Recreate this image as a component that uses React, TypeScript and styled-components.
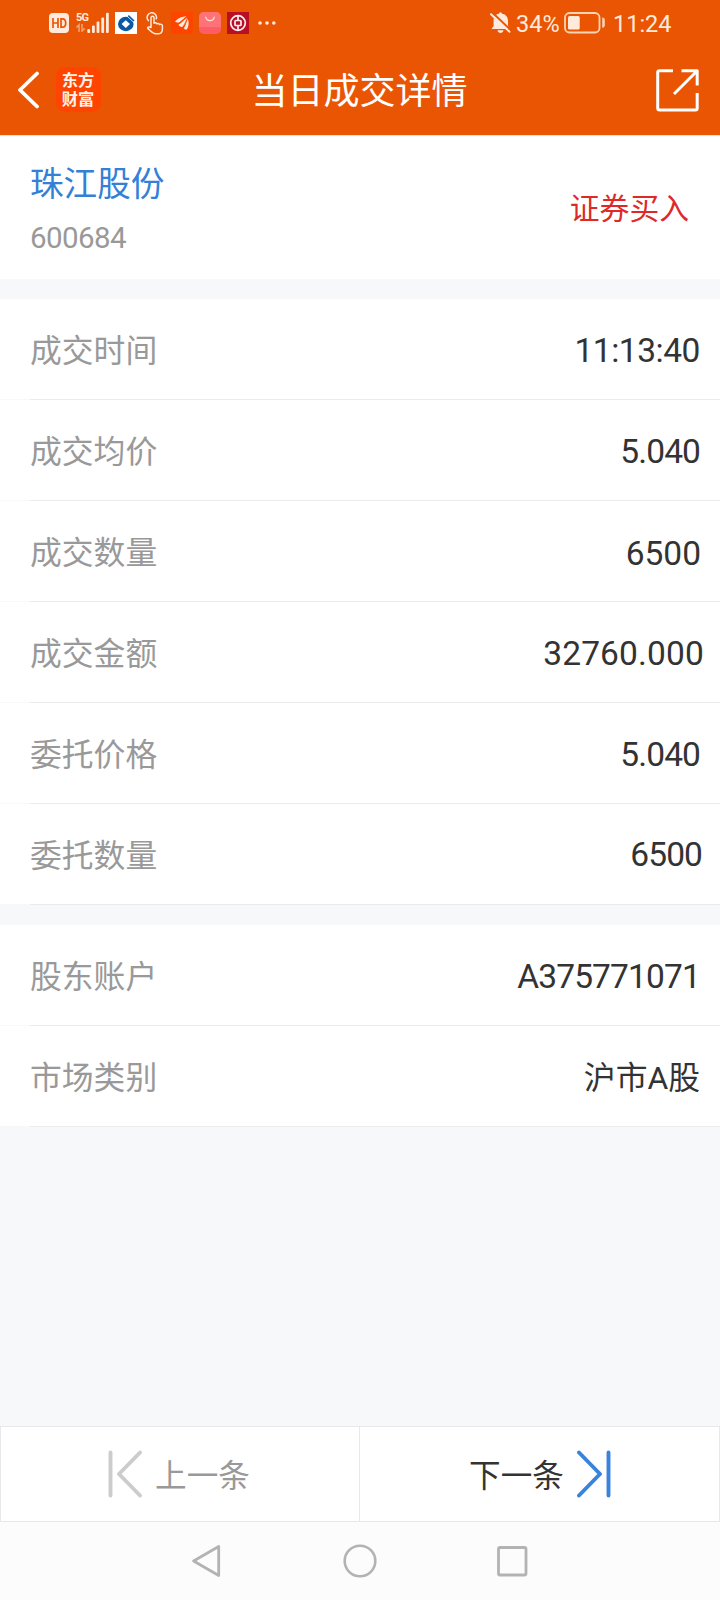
import React, { Fragment } from "react";
import styled, { createGlobalStyle } from "styled-components";

const GlobalStyle = createGlobalStyle`
  * { box-sizing: border-box; }
  body {
    margin: 0;
    background: #f6f8fa;
    font-family: Roboto, "Noto Sans CJK SC", sans-serif;
  }
  svg { display: block; flex: none; }
`;

const Screen = styled.div`
  width: 720px;
  height: 1600px;
  display: flex;
  flex-direction: column;
  background: #f6f8fa;
  overflow: hidden;
`;

const Top = styled.header`
  height: 136px;
  flex: none;
  background: #ea5504;
  border-bottom: 1px solid #fbdfbd;
`;

const StatusBar = styled.div`
  height: 46px;
  padding: 0 49px;
  display: flex;
  align-items: center;
  color: #ffeadb;
`;

const StatusItem = styled.div<{ $before?: number }>`
  margin-left: ${(p) => p.$before ?? 0}px;
`;

const StatusText = styled.span<{ $before: number; $width: number; $spacing?: number }>`
  margin-left: ${(p) => p.$before}px;
  width: ${(p) => p.$width}px;
  font-size: 23.5px;
  line-height: 46px;
  padding-top: 1px;
  letter-spacing: ${(p) => p.$spacing ?? 0}px;
  white-space: nowrap;
`;

const Spacer = styled.div`
  flex: 1;
`;

const TitleBar = styled.div`
  height: 89px;
  padding: 0 21px 0 18px;
  display: grid;
  grid-template-columns: 200px 1fr 200px;
  align-items: center;
  color: #fff;
`;

const TitleLeft = styled.div`
  display: flex;
  align-items: center;
  gap: 17px;
  padding-bottom: 1px;
`;

const Logo = styled.div`
  width: 45px;
  height: 45px;
  margin-bottom: 2px;
  padding-right: 1px;
  border-radius: 9px;
  background: #ff4400;
  display: flex;
  flex-direction: column;
  align-items: center;
  justify-content: center;
  font-family: "Noto Sans CJK SC", sans-serif;
  font-weight: 700;
  font-size: 16.3px;
  line-height: 19.5px;
  color: #fff3ea;
`;

const Title = styled.h1`
  margin: 0;
  padding: 3px 0 0 2px;
  font-size: 36px;
  font-weight: 400;
  line-height: 52px;
  text-align: center;
  white-space: nowrap;
`;

const TitleRight = styled.div`
  display: flex;
  justify-content: flex-end;
`;

const Stock = styled.section`
  height: 143px;
  flex: none;
  margin-bottom: 20px;
  padding: 25px 31px 0 30px;
  display: flex;
  justify-content: space-between;
  background: #fff;
`;

const StockName = styled.div`
  font-size: 33.6px;
  line-height: 48px;
  color: #3380d6;
`;

const StockCode = styled.div`
  margin-top: 11px;
  font-size: 29.5px;
  line-height: 36px;
  letter-spacing: -0.6px;
  color: #999;
`;

const Side = styled.div`
  padding-top: 26px;
  font-size: 29.8px;
  line-height: 44px;
  color: #dd2a28;
`;

const Group = styled.section`
  flex: none;
  margin-bottom: 20px;
`;

const Row = styled.div`
  height: 100px;
  padding: 0 19px 0 30px;
  background: #fff;
  display: flex;
  align-items: center;
  justify-content: space-between;
`;

const Divider = styled.div`
  height: 1px;
  margin-left: 30px;
  background: #ebebed;
`;

const Label = styled.span`
  font-size: 31.8px;
  line-height: 46px;
  padding-top: 4px;
  color: #999;
`;

const Value = styled.span<{ $spacing?: number; $right?: number; $top?: number; $size?: number }>`
  font-size: ${(p) => p.$size ?? 33.5}px;
  line-height: 46px;
  letter-spacing: ${(p) => p.$spacing ?? 0}px;
  margin-right: ${(p) => p.$right ?? 0}px;
  padding-top: ${(p) => p.$top ?? 4}px;
  color: #333;
`;

const Pager = styled.div`
  height: 96px;
  flex: none;
  margin-top: auto;
  display: grid;
  grid-template-columns: 358px 1fr;
  background: #fff;
  border: 1px solid #e8e8ea;
`;

const PagerButton = styled.button<{ $muted?: boolean }>`
  border: 0;
  border-left: ${(p) => (p.$muted ? "0" : "1px solid #e8e8ea")};
  padding: ${(p) => (p.$muted ? "0 2px 0 0" : "0 0 0 1px")};
  background: none;
  display: flex;
  align-items: center;
  justify-content: center;
  gap: 12px;
  font: inherit;
  font-size: 31.6px;
  line-height: 46px;
  color: ${(p) => (p.$muted ? "#999" : "#333")};
`;

const PagerText = styled.span`
  padding-top: 5px;
`;

const NavBar = styled.nav`
  height: 78px;
  flex: none;
  display: flex;
  align-items: center;
  justify-content: center;
  gap: 120px;
  background: #fcfcfc;
`;

interface RowData {
  label: string;
  value: string;
  spacing?: number;
  right?: number;
  top?: number;
  size?: number;
}

const trade: RowData[] = [
  { label: "成交时间", value: "11:13:40", spacing: -0.45, right: 1 },
  { label: "成交均价", value: "5.040", spacing: -0.9, right: 1 },
  { label: "成交数量", value: "6500", spacing: 0, top: 5 },
  { label: "成交金额", value: "32760.000", spacing: 0.15, right: -3 },
  { label: "委托价格", value: "5.040", spacing: -0.9, right: 1 },
  { label: "委托数量", value: "6500", spacing: -0.9, top: 2, right: -1 },
];

const account: RowData[] = [
  { label: "股东账户", value: "A375771071", spacing: -0.85, right: 1 },
  { label: "市场类别", value: "沪市A股", spacing: 0, size: 31.8, right: 1 },
];

const Rows = ({ items }: { items: RowData[] }) => (
  <Group>
    {items.map((r) => (
      <Fragment key={r.label}>
        <Row>
          <Label>{r.label}</Label>
          <Value $spacing={r.spacing} $right={r.right} $top={r.top} $size={r.size}>
            {r.value}
          </Value>
        </Row>
        <Divider />
      </Fragment>
    ))}
  </Group>
);

const HdIcon = () => (
  <svg width="20" height="20" viewBox="0 0 20 20">
    <rect width="20" height="20" rx="4" fill="#ffeadb" />
    <path d="M4 5v10M9 5v10M4 10h5M12 5.8v8.4h1.5c2.2 0 3.2-1.6 3.2-4.2s-1-4.2-3.2-4.2z" fill="none" stroke="#ea5504" strokeWidth="1.7" />
  </svg>
);

const Network = styled.div`
  height: 22px;
  display: flex;
  align-items: flex-end;
`;

const NetworkType = styled.div`
  width: 10px;
  height: 22px;
  font-size: 11px;
  font-weight: 700;
  line-height: 11px;
  letter-spacing: -0.8px;
`;

const NetworkIcon = () => (
  <Network>
    <NetworkType>
      5G
      <svg width="10" height="9" viewBox="0 0 10 9" fill="none" stroke="#f5a071" strokeWidth="1.6">
        <path d="M0.5 4.5L3 2v7M6 1v7l2.6-2.6" />
      </svg>
    </NetworkType>
    <svg width="24" height="22" viewBox="0 0 24 22" fill="#ffeadb">
      <rect x="1.3" y="17" width="2.8" height="4" rx="1" />
      <rect x="6" y="13.5" width="2.8" height="7.5" rx="1" />
      <rect x="10.6" y="9.5" width="2.8" height="11.5" rx="1" />
      <rect x="15.3" y="5.5" width="2.8" height="15.5" rx="1" />
      <rect x="20" y="0.7" width="2.8" height="20.3" rx="1" />
    </svg>
  </Network>
);

const BankBlueIcon = () => (
  <svg width="22" height="22" viewBox="0 0 22 22">
    <rect width="22" height="22" fill="#fff" />
    <ellipse cx="10.800" cy="12" rx="7.800" ry="7.200" fill="#0a58a4" />
    <path d="M10.800 8.200l4.200 3.900-4.200 3.900-4.200-3.900z" fill="#fff" />
    <path d="M11.500 3.500L18.500 10" stroke="#fff" strokeWidth="1" />
    <path d="M13.300 3.700L19 9" stroke="#0a58a4" strokeWidth="1.600" />
  </svg>
);

const TouchIcon = () => (
  <svg width="18" height="23" viewBox="0 0 18 23" fill="none" stroke="#ffeadb" strokeWidth="1.500" strokeLinejoin="round" strokeLinecap="round">
    <path d="M2.300 8.600A4.700 4.700 0 1 1 10.300 6.800" />
    <path d="M5 15.500V5.700a1.500 1.500 0 0 1 3 0v5.500c.8-.8 2.400-.6 2.800.6.900-.7 2.400-.4 2.700.7 1-.6 2.900-.2 2.900 1.300v2.700c0 3.200-1 5.200-3.700 5.200H9.500c-2.600 0-4.500-2.500-7.500-5-1-1.200.6-2.500 3-1.200z" />
  </svg>
);

const BrokerIcon = () => (
  <svg width="22" height="22" viewBox="0 0 22 22">
    <rect width="22" height="22" fill="#ff4400" />
    <path d="M4 9.500C7 6 11 4.500 15.500 4.300c-2.500 1.700-5 4.700-7 6-1.500.7-3.200.2-4.500-.8z" fill="#ffeadb" />
    <path d="M7.500 12.800c3-2 5.400-4.700 8.400-7.400-.1 3.700-2.200 8.200-5 9.600-1.400.1-2.700-.8-3.400-2.200z" fill="#ffeadb" />
    <path d="M12.800 16.200c1.900-3 3.100-6.200 3.800-9.700 1.700 3.700 1.100 8.200-.8 11-1.400-.1-2.500-.5-3-1.300z" fill="#ffeadb" />
    <path d="M7.200 11.600L16 5M11.800 15.600L16.600 6" stroke="#ff4400" strokeWidth=".8" />
  </svg>
);

const ShopIcon = () => (
  <svg width="22" height="22" viewBox="0 0 22 22">
    <rect width="22" height="22" rx="5" fill="#ff5d66" />
    <path d="M0 15V5a5 5 0 0 1 5-5h12a5 5 0 0 1 5 5v10z" fill="#ff7278" />
    <path d="M6.800 5.200c.8 4.600 7.600 4.600 8.400 0" fill="none" stroke="#ffe0d6" strokeWidth="1.300" strokeLinecap="round" />
  </svg>
);

const BankRedIcon = () => (
  <svg width="22" height="22" viewBox="0 0 22 22" fill="none" stroke="#ffeef0">
    <rect width="22" height="22" fill="#b80f25" stroke="none" />
    <circle cx="11" cy="11" r="7.300" strokeWidth="1.700" />
    <rect x="8" y="8.500" width="6" height="5" rx=".8" strokeWidth="1.700" />
    <path d="M11 3.500v5M11 13.500v5" strokeWidth="1.700" />
  </svg>
);

const MoreIcon = () => (
  <svg width="18" height="4" viewBox="0 0 18 4" fill="#ffeadb">
    <circle cx="2" cy="2" r="1.800" />
    <circle cx="9" cy="2" r="1.800" />
    <circle cx="15.800" cy="2" r="1.800" />
  </svg>
);

const MuteIcon = () => (
  <svg width="21" height="22" viewBox="0 0 21 22">
    <path d="M9 1.800a1.500 1.500 0 0 1 3 0c3.800.6 6 3.400 6 7V14l2 3H1.500L3.600 14V8.800c0-3.600 1.800-6.400 5.400-7zM7.500 18.300h6c-.4 1.800-1.600 2.700-3 2.700s-2.600-.9-3-2.700z" fill="#ffeadb" />
    <path d="M2.800 1L21.400 18.600" stroke="#ea5504" strokeWidth="2" />
    <path d="M1 2.200l18.500 17.600" stroke="#ffeadb" strokeWidth="1.900" strokeLinecap="round" />
  </svg>
);

const BatteryIcon = () => (
  <svg width="42" height="22" viewBox="0 0 42 22">
    <rect x="1" y="1" width="34.500" height="19.500" rx="4.500" fill="none" stroke="#ffd3b6" strokeWidth="1.800" />
    <rect x="4" y="4" width="11.700" height="13.500" rx="1.500" fill="#ffeadb" />
    <path d="M38.200 5.500c1.800 0 2.600 1 2.600 2.600v5c0 1.600-.8 2.600-2.600 2.600z" fill="#ffd3b6" />
  </svg>
);

const BackIcon = () => (
  <svg width="21" height="38" viewBox="0 0 21 38">
    <path d="M19 2.500L2 19l17 16.500" fill="none" stroke="#fff" strokeWidth="3.800" strokeLinecap="round" strokeLinejoin="round" />
  </svg>
);

const ShareIcon = () => (
  <svg width="43" height="43" viewBox="0 0 43 43" fill="none" stroke="#fff" strokeWidth="3" strokeLinecap="butt" strokeLinejoin="round">
    <path d="M17 1.700H3.500Q1.700 1.700 1.700 3.500V39Q1.700 41 3.500 41H39.500Q41.200 41 41.200 39V24" />
    <path d="M25.500 1.700H41.200V16.500M41 2L18 25" />
  </svg>
);

const SkipIcon = ({ color, flip }: { color: string; flip?: boolean }) => (
  <svg width="35" height="48" viewBox="0 0 35 48">
    <path
      d="M2.500 2.500V45.500M32 2.500L11 24L32 45.500"
      transform={flip ? "translate(35 0) scale(-1 1)" : undefined}
      fill="none"
      stroke={color}
      strokeWidth="3.900"
      strokeLinecap="round"
      strokeLinejoin="round"
    />
  </svg>
);

export default function App() {
  return (
    <>
      <GlobalStyle />
      <Screen>
        <Top>
          <StatusBar>
            <StatusItem><HdIcon /></StatusItem>
            <StatusItem $before={7}><NetworkIcon /></StatusItem>
            <StatusItem $before={5}><BankBlueIcon /></StatusItem>
            <StatusItem $before={9}><TouchIcon /></StatusItem>
            <StatusItem $before={7}><BrokerIcon /></StatusItem>
            <StatusItem $before={6}><ShopIcon /></StatusItem>
            <StatusItem $before={6}><BankRedIcon /></StatusItem>
            <StatusItem $before={9}><MoreIcon /></StatusItem>
            <Spacer />
            <StatusItem><MuteIcon /></StatusItem>
            <StatusText $before={5} $width={43} $spacing={0}>34%</StatusText>
            <StatusItem $before={5}><BatteryIcon /></StatusItem>
            <StatusText $before={7} $width={58} $spacing={0}>11:24</StatusText>
          </StatusBar>
          <TitleBar>
            <TitleLeft>
              <BackIcon />
              <Logo>
                <span>东方</span>
                <span>财富</span>
              </Logo>
            </TitleLeft>
            <Title>当日成交详情</Title>
            <TitleRight><ShareIcon /></TitleRight>
          </TitleBar>
        </Top>

        <Stock>
          <div>
            <StockName>珠江股份</StockName>
            <StockCode>600684</StockCode>
          </div>
          <Side>证券买入</Side>
        </Stock>

        <Rows items={trade} />
        <Rows items={account} />

        <Pager>
          <PagerButton $muted>
            <SkipIcon color="#ccc" />
            <PagerText>上一条</PagerText>
          </PagerButton>
          <PagerButton>
            <PagerText>下一条</PagerText>
            <SkipIcon color="#3883dc" flip />
          </PagerButton>
        </Pager>

        <NavBar>
          <svg width="31" height="34" viewBox="0 0 31 34">
            <path d="M26.700 2.500v29L1.600 17z" fill="none" stroke="#b3b3b3" strokeWidth="2.800" strokeLinejoin="round" />
          </svg>
          <svg width="34" height="34" viewBox="0 0 34 34">
            <circle cx="17" cy="17" r="15.300" fill="none" stroke="#b3b3b3" strokeWidth="2.600" />
          </svg>
          <svg width="31" height="31" viewBox="0 0 31 31">
            <rect x="1.500" y="1.500" width="27.500" height="27.500" rx="1.500" fill="none" stroke="#b3b3b3" strokeWidth="2.800" />
          </svg>
        </NavBar>
      </Screen>
    </>
  );
}
